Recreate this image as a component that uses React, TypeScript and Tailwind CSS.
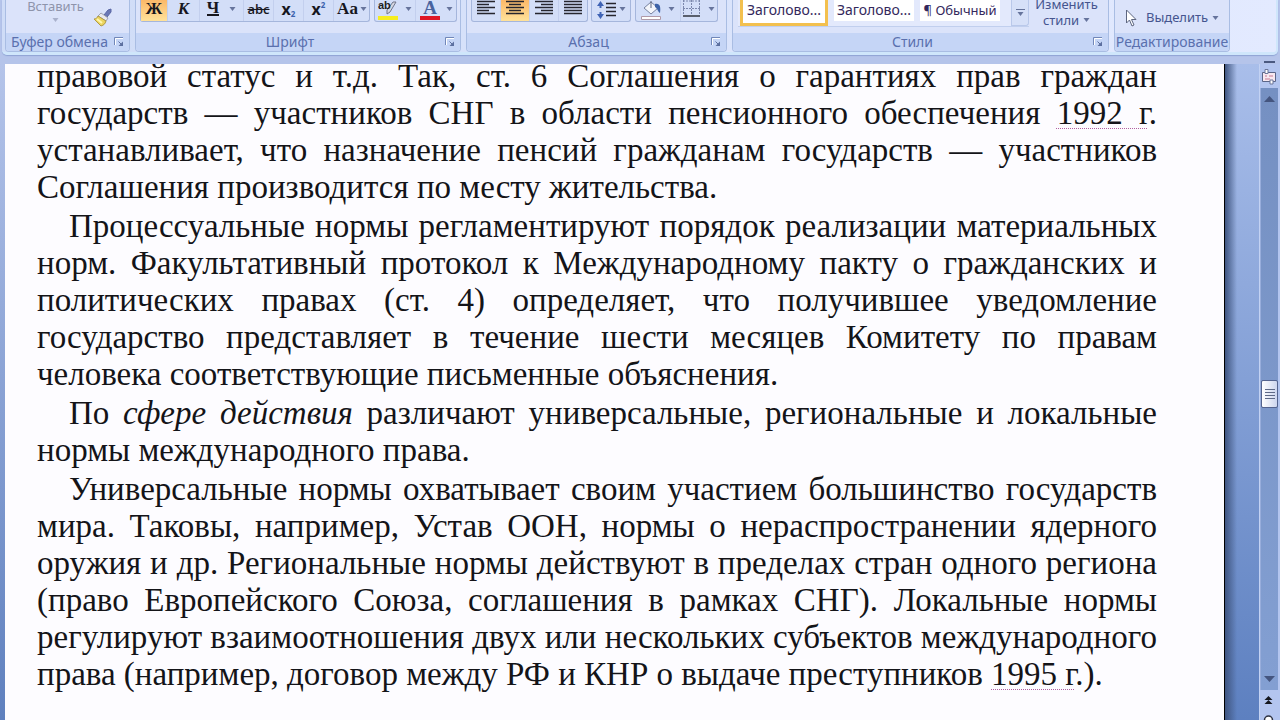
import { clsx } from "clsx";
import type { ReactNode } from "react";

function Caret({ muted }: { muted?: boolean }) {
  return (
    <svg
      viewBox="0 0 7 4"
      aria-hidden="true"
      className={clsx("h-1 w-[7px] shrink-0", muted ? "text-[#a9b1cc]" : "text-[#66749c]")}
    >
      <path d="M0.5 0h6L3.5 4z" fill="currentColor" />
    </svg>
  );
}

function Group({
  label,
  className,
  launcher = true,
  children,
}: {
  label: string;
  className: string;
  launcher?: boolean;
  children: ReactNode;
}) {
  return (
    <section
      className={clsx(
        "flex shrink-0 flex-col rounded-b-[4px] border border-t-0 border-[#a9bde3] bg-[#dbe3fa]",
        className
      )}
    >
      <div className="flex h-[33px] px-1">{children}</div>
      <div className="flex h-[18px] items-center rounded-b-[3px] bg-[#c5d5f6] text-[14px] leading-4 text-[#5a70ae]">
        <h2 className="flex-1 whitespace-nowrap text-center">{label}</h2>
        {launcher && (
          <button type="button" aria-label={label + ": параметры"} className="mr-1 h-3 w-3">
            <svg viewBox="0 0 12 12" className="h-3 w-3">
              <path d="M1.5 9V1.5H10" fill="none" stroke="#7187b8" />
              <path d="M2.5 9V2.5H10" fill="none" stroke="#fff" />
              <path d="M5.5 5.500l3 3" stroke="#5c6f9f" />
              <path d="M10 5.500V10H5.500z" fill="#5c6f9f" />
            </svg>
          </button>
        )}
      </div>
    </section>
  );
}

function Strip({ className, children }: { className: string; children: ReactNode }) {
  return (
    <div
      className={clsx(
        "flex h-[22px] shrink-0 rounded-b-[3px] border border-t-0 border-[#a5b6dc] bg-[#d3def8]",
        className
      )}
    >
      {children}
    </div>
  );
}

function Tool({
  label,
  className,
  active,
  caret,
  children,
}: {
  label: string;
  className: string;
  active?: boolean;
  caret?: boolean;
  children: ReactNode;
}) {
  return (
    <button
      type="button"
      aria-label={label}
      aria-pressed={active}
      className={clsx(
        "flex h-[21px] shrink-0 items-center justify-center border-r border-[#c3cfee] pb-1 font-['Liberation_Serif',serif] text-[17px] leading-4 text-[#17171f] last:border-r-0",
        active && "bg-linear-to-b from-[#fbb868] to-[#ffe29a]",
        className
      )}
    >
      {children}
      {caret && <Caret />}
    </button>
  );
}

function LinesIcon({ d }: { d: string }) {
  return (
    <svg viewBox="0 0 18 17" className="h-[17px] w-[18px]">
      <path d={d} stroke="#26262e" strokeWidth="1.4" fill="none" />
    </svg>
  );
}

function StyleItem({ selected, children }: { selected?: boolean; children: ReactNode }) {
  return (
    <button
      type="button"
      className={clsx(
        "shrink-0 whitespace-nowrap bg-white text-center text-[#33285c]",
        selected
          ? "h-[26px] w-[88px] border-[3px] border-t-0 border-[#f3c04e] pb-1"
          : "h-[21px] w-20 pb-0.5"
      )}
    >
      {children}
    </button>
  );
}

function Ribbon() {
  return (
    <header className="shrink-0 bg-[#b5c4ea] px-0.5 font-['Noto_Sans',sans-serif]">
      <div className="flex h-[55px] gap-[5px] rounded-b-[5px] border-b-[3px] border-r-2 border-[#cfe6fb] bg-linear-to-r from-[#cfdcf7] to-[#e3eaff] pl-[3px] shadow-[0_1px_1px_#8fa4d4]">
        <Group label="Буфер обмена" className="w-[125px]">
          <button
            type="button"
            className="flex w-[83px] flex-col items-center gap-1.5 pl-2 text-[13px] leading-3 text-[#8e94ab]"
          >
            Вставить
            <Caret muted />
          </button>
          <button type="button" aria-label="Формат по образцу" className="mt-2 h-5 w-5">
            <svg viewBox="0 0 20 20" className="h-5 w-5">
              <path d="M11 7l4-5 3-1v3l-4 5z" fill="#6b78b5" stroke="#5a67a4" />
              <path d="M8 5l7 5-2 3-8-5z" fill="#e9e9ee" stroke="#a1a4b2" />
              <path d="M5 8l8 5c-1 3-2 4-5 5L1 11c2 0 3-1 4-3z" fill="#ecd55e" stroke="#b09a45" />
              <path d="M4 11l5 4" stroke="#fff6ad" strokeWidth="2" />
            </svg>
          </button>
        </Group>

        <Group label="Шрифт" className="w-[326px]">
          <Strip className="w-[230px]">
            <Tool label="Полужирный" active className="w-[27px]"><b>Ж</b></Tool>
            <Tool label="Курсив" className="w-8"><b className="italic">К</b></Tool>
            <Tool label="Подчеркнутый" caret className="w-11 gap-2.5">
              <b className="border-b-2 border-[#17171f] leading-[13px]">Ч</b>
            </Tool>
            <Tool label="Зачеркнутый" className="w-[30px]">
              <span className="font-['Open_Sans',sans-serif] text-[13px] font-semibold line-through">abc</span>
            </Tool>
            <Tool label="Подстрочный знак" className="w-[30px]">
              <b className="font-['Noto_Sans',sans-serif] text-[16px]">x</b>
              <span className="mt-2.5 font-['Noto_Sans',sans-serif] text-[8px] font-bold text-[#3d62ad]">2</span>
            </Tool>
            <Tool label="Надстрочный знак" className="w-[30px]">
              <b className="font-['Noto_Sans',sans-serif] text-[16px]">x</b>
              <span className="mb-2 font-['Noto_Sans',sans-serif] text-[8px] font-bold text-[#3d62ad]">2</span>
            </Tool>
            <Tool label="Регистр" caret className="w-9 gap-0.5">
              <b className="text-[17px]">Aa</b>
            </Tool>
          </Strip>
          <Strip className="ml-1 w-[83px]">
            <Tool label="Цвет выделения текста" caret className="w-[41px] gap-1.5">
              <svg viewBox="0 0 21 20" className="mt-1 h-5 w-[21px]">
                <path d="M18 1l-6 10-3 2 0-4L15 1z" fill="#d5d7e0" stroke="#70758a" />
                <text x="0" y="8" fontSize="11" fontWeight="bold" fontFamily="Liberation Sans" fill="#222">ab</text>
                <path d="M0 15h20v4H0z" fill="#f6ed1f" />
              </svg>
            </Tool>
            <Tool label="Цвет текста" caret className="w-10 gap-1.5">
              <svg viewBox="0 0 20 20" className="mt-1 h-5 w-5">
                <text x="10" y="13" fontSize="19" fontWeight="bold" textAnchor="middle" fontFamily="Liberation Serif" fill="#49639f">
                  A
                </text>
                <path d="M0 15h20v4H0z" fill="#df1626" />
              </svg>
            </Tool>
          </Strip>
        </Group>

        <Group label="Абзац" className="w-[261px]">
          <Strip className="w-[117px]">
            <Tool label="По левому краю" className="w-[29px]">
              <LinesIcon d="M0 1.5h18M0 4.5h12M0 7.5h18M0 10.5h12M0 13.5h18" />
            </Tool>
            <Tool label="По центру" active className="w-[29px]">
              <LinesIcon d="M0 1.5h18M3 4.5h12M0 7.5h18M3 10.5h12M0 13.5h18" />
            </Tool>
            <Tool label="По правому краю" className="w-[29px]">
              <LinesIcon d="M0 1.5h18M6 4.5h12M0 7.5h18M6 10.5h12M0 13.5h18" />
            </Tool>
            <Tool label="По ширине" className="w-7">
              <LinesIcon d="M0 1.5h18M0 4.5h18M0 7.5h18M0 10.5h18M0 13.5h18" />
            </Tool>
          </Strip>
          <Strip className="ml-[3px] w-10">
            <Tool label="Междустрочный интервал" caret className="w-[38px] gap-[3px]">
              <svg viewBox="0 0 19 19" className="mt-1 h-[19px] w-[19px]">
                <path d="M3.500 2v5M3.500 11v5" stroke="#3f63b5" strokeWidth="2" />
                <path d="M0 5l3.500-5L7 5zM0 13l3.500 5L7 13z" fill="#3f63b5" />
                <path d="M9 2.500h10M9 6.500h10M9 10.500h10M9 14.500h10" stroke="#26262e" strokeWidth="1.400" />
              </svg>
            </Tool>
          </Strip>
          <Strip className="ml-1 w-[83px]">
            <Tool label="Заливка" caret className="w-[45px] gap-1.5">
              <svg viewBox="0 0 21 20" className="mt-1 h-5 w-[21px]">
                <path d="M3 7l7-6 7 6-7 6z" fill="#f4f6fb" stroke="#77829f" />
                <path d="M10 0v7" stroke="#5b647f" />
                <path d="M14 3c5-1 6 3 5 9-2-1-2-4-5-6z" fill="#3e63a8" />
                <path d="M0.500 15.500h19v3h-19z" fill="#fff" stroke="#b09aa8" />
              </svg>
            </Tool>
            <Tool label="Границы" caret className="w-9 gap-2">
              <svg viewBox="0 0 17 18" className="h-[18px] w-[17px]">
                <path d="M0.500 0v15M8.500 0v15M16.500 0v15M0 1h17M0 8.500h17" stroke="#7c88ad" strokeDasharray="2 1" />
                <path d="M0 16h17" stroke="#30343f" strokeWidth="1.500" />
              </svg>
            </Tool>
          </Strip>
        </Group>

        <Group label="Стили" className="w-[377px]">
          <div className="ml-px flex h-[27px] w-[291px] shrink-0 gap-1.5 border-b border-[#c1cfee] bg-[#e3e9fc] pl-0.5 text-[14px] leading-4">
            <StyleItem selected>Заголово...</StyleItem>
            <StyleItem>Заголово...</StyleItem>
            <StyleItem>
              <span className="text-[13px]">¶ Обычный</span>
            </StyleItem>
            <button
              type="button"
              aria-label="Дополнительные стили"
              className="ml-auto flex w-[18px] flex-col items-center justify-center gap-0.5 rounded-br-[3px] border border-t-0 border-[#b9c8ea] bg-[#d6e0f8]"
            >
              <span className="h-px w-[9px] bg-[#66749c]" />
              <Caret />
            </button>
          </div>
          <button
            type="button"
            className="flex flex-1 flex-col items-center text-[13px] leading-4 text-[#45558f]"
          >
            <span className="-mt-1">Изменить</span>
            <span className="flex items-center gap-1">
              стили <Caret />
            </span>
          </button>
        </Group>

        <Group label="Редактирование" launcher={false} className="w-[116px]">
          <button
            type="button"
            className="ml-1.5 mt-1.5 flex h-6 items-center gap-1 whitespace-nowrap text-[13px] text-[#45558f]"
          >
            <svg viewBox="0 0 13 18" className="mr-1 h-[18px] w-[13px]">
              <path d="M1.500 1v13l3-3 2.500 6 2-1-2.500-5.500H11z" fill="#fff" stroke="#5d6680" />
            </svg>
            Выделить
            <Caret />
          </button>
        </Group>
      </div>
      {/* split handle above the scroll bar */}
      <div className="flex h-[9px] items-end justify-end pb-px pr-[3px]">
        <span className="h-0.5 w-[11px] bg-[#4a5980]" />
      </div>
    </header>
  );
}

function Marked({ children }: { children: ReactNode }) {
  return (
    <span className="underline decoration-[#b0609f] decoration-dotted decoration-1 underline-offset-4">
      {children}
    </span>
  );
}

function Page() {
  return (
    <main className="min-w-0 flex-1 overflow-hidden border-r border-black bg-[#fdfcff] pl-8 pr-[67px] font-['Liberation_Serif',serif] text-[33px] leading-[37px] text-[#141418]">
      <article className="-mt-1.5 space-y-0.5 text-justify">
        <p>
          правовой статус и т.д. Так, ст. 6 Соглашения о гарантиях прав граждан государств — участников
          СНГ в области пенсионного обеспечения <Marked>1992 г</Marked>. устанавливает, что назначение
          пенсий гражданам государств — участников Соглашения производится по месту жительства.
        </p>
        <p className="indent-8">
          Процессуальные нормы регламентируют порядок реализации материальных норм. Факультативный
          протокол к Международному пакту о гражданских и политических правах (ст. 4) определяет, что
          получившее уведомление государство представляет в течение шести месяцев Комитету по правам
          человека соответствующие письменные объяснения.
        </p>
        <p className="indent-8">
          По <em>сфере действия</em> различают универсальные, региональные и локальные нормы
          международного права.
        </p>
        <p className="indent-8">
          Универсальные нормы охватывает своим участием большинство государств мира. Таковы, например,
          Устав ООН, нормы о нераспространении ядерного оружия и др. Региональные нормы действуют в
          пределах стран одного региона (право Европейского Союза, соглашения в рамках СНГ). Локальные
          нормы регулируют взаимоотношения двух или нескольких субъектов международного права
          (например, договор между РФ и КНР о выдаче преступников <Marked>1995 г</Marked>.).
        </p>
      </article>
    </main>
  );
}

function ScrollBar() {
  return (
    <div className="flex w-[21px] shrink-0 flex-col border-l border-[#c3d2f3] bg-[#b3c5ef] pr-0.5">
      <div className="flex h-6 shrink-0 flex-col items-center">
        <svg viewBox="0 0 16 18" className="mt-1 h-[18px] w-4">
          <path d="M1.500 4.500h13v9h-13z" fill="#f7e8f0" stroke="#5b6688" />
          <path d="M4 8h2M8 8h4M4 11h5" stroke="#c77b94" />
          <path d="M4 1.500h3v4H4zM9 12h3v4H9z" fill="#fff" stroke="#6d779a" />
        </svg>
      </div>
      <div className="flex flex-1 flex-col items-center border-l border-[#98addb] bg-linear-to-b from-[#7590c2] to-[#839fd2]">
        <button type="button" aria-label="Вверх" className="mt-2">
          <svg viewBox="0 0 11 6" className="h-1.5 w-[11px]"><path d="M5.500 0L11 6H0z" fill="#44557f" /></svg>
        </button>
        <div className="flex-[280]" />
        <button
          type="button"
          aria-label="Полоса прокрутки"
          className="flex h-7 w-[17px] flex-col items-center justify-center gap-0.5 rounded-[2px] border border-[#54648f] bg-linear-to-r from-white to-[#cdd6ee]"
        >
          <span className="h-px w-2.5 bg-[#5e6986]" />
          <span className="h-px w-2.5 bg-[#5e6986]" />
          <span className="h-px w-2.5 bg-[#5e6986]" />
          <span className="h-px w-2.5 bg-[#5e6986]" />
        </button>
        <div className="flex-[270]" />
        <button type="button" aria-label="Вниз" className="mb-2">
          <svg viewBox="0 0 11 6" className="h-1.5 w-[11px]"><path d="M0 0h11L5.500 6z" fill="#44557f" /></svg>
        </button>
      </div>
      <div className="flex h-[30px] shrink-0 flex-col items-center overflow-hidden">
        <svg viewBox="0 0 12 30" className="h-[30px] w-3">
          <path d="M5.500 6l4 4h-8zM5.500 10l4 4h-8z" fill="#15171f" />
          <circle cx="5.500" cy="30" r="4" fill="#fff" stroke="#2d3242" strokeWidth="1.500" />
        </svg>
      </div>
    </div>
  );
}

export default function App() {
  return (
    <div className="flex h-screen flex-col overflow-hidden bg-[#b5c4ea]">
      <Ribbon />
      <div className="flex min-h-0 flex-1">
        <div className="w-[5px] shrink-0 bg-linear-to-b from-[#b5c4ea] to-[#5f80be]" />
        <Page />
        <div className="flex w-[34px] shrink-0 bg-linear-to-b from-[#a9beea] to-[#5d80c0]">
          <div className="w-3 bg-linear-to-r from-[#3f5580] to-transparent" />
        </div>
        <ScrollBar />
      </div>
    </div>
  );
}
